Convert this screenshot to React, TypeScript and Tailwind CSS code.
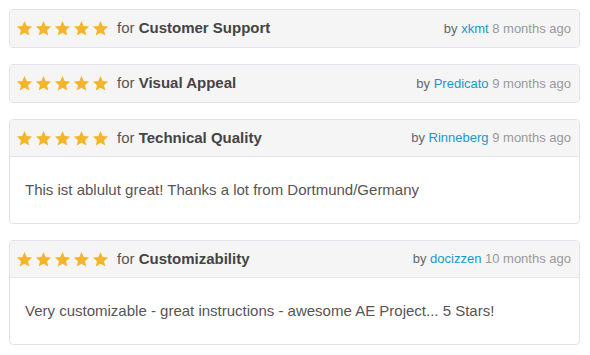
import React from "react";

type Review = { cat: string; user: string; time: string; body?: string };

const reviews: Review[] = [
  { cat: "Customer Support", user: "xkmt", time: "8 months ago" },
  { cat: "Visual Appeal", user: "Predicato", time: "9 months ago" },
  { cat: "Technical Quality", user: "Rinneberg", time: "9 months ago", body: "This ist ablulut great! Thanks a lot from Dortmund/Germany" },
  { cat: "Customizability", user: "docizzen", time: "10 months ago", body: "Very customizable - great instructions - awesome AE Project... 5 Stars!" },
];

function Star() {
  return (
    <svg width="17" height="17" viewBox="0 0 24 24">
      <path d="M12 1.5l3.1 7.1 7.7.7-5.8 5.1 1.7 7.6L12 18l-6.7 4 1.7-7.6L1.2 9.3l7.7-.7z" fill="#f4b52a" />
    </svg>
  );
}

export default function App() {
  return (
    <div className="w-[590px] h-[355px] bg-white pt-[9px] pl-[9px] pr-[10px] flex flex-col gap-4" style={{ fontFamily: '"Liberation Sans", Arial, sans-serif' }}>
      {reviews.map((r) => (
        <div key={r.user} className="border border-[#dfe3e8] rounded-[4px] overflow-hidden bg-white">
          <div className={`h-[37px] bg-[#f5f5f5] flex items-center pl-[6px] pr-[8px] ${r.body ? "border-b border-[#e3e7eb]" : ""}`}>
            <div className="flex gap-[2px]">
              <Star /><Star /><Star /><Star /><Star />
            </div>
            <div className="ml-[8px] text-[15px] text-[#555]">
              for <span className="font-bold text-[#444]">{r.cat}</span>
            </div>
            <div className="ml-auto text-[13px] text-[#666]">
              by <span className="text-[#1a97cc]">{r.user}</span> <span className="text-[#999]">{r.time}</span>
            </div>
          </div>
          {r.body && (
            <div className="px-[15px] py-[23px] text-[15px] leading-[20px] text-[#555]">{r.body}</div>
          )}
        </div>
      ))}
    </div>
  );
}
